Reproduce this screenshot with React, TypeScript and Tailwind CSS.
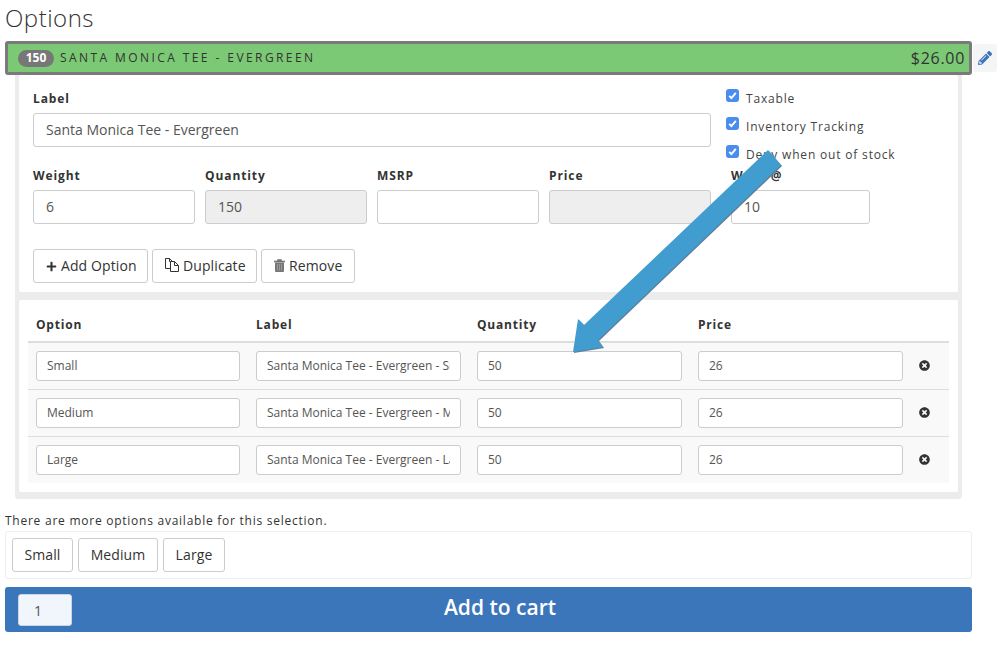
import { FaPencilAlt, FaPlus, FaTimesCircle } from "react-icons/fa";

const inputBase =
  "block w-full rounded-[3px] border border-[#cccccc] pb-[2px] text-[#555555] outline-none";

function Field({ label, value, disabled, width }: { label: string; value: string; disabled?: boolean; width: string }) {
  return (
    <div className={width}>
      <div className="mt-[1px] h-4 text-[12px] leading-4 font-bold tracking-[0.9px] text-[#333333]">{label}</div>
      <input
        readOnly
        value={value}
        className={`${inputBase} mt-[6px] h-[34px] px-3 text-[14px] ${disabled ? "bg-[#eeeeee]" : "bg-white"}`}
      />
    </div>
  );
}

function Check({ label }: { label: string }) {
  return (
    <div className="flex h-5 items-center">
      <svg width="13" height="13" viewBox="0 0 13 13" className="-translate-y-[3px]">
        <rect width="13" height="13" rx="3" fill="#4a8df0" />
        <path d="M3.2 6.8 L5.4 9 L9.8 3.8" fill="none" stroke="#ffffff" strokeWidth="1.9" />
      </svg>
      <span className="ml-[7px] translate-y-[1px] text-[12px] tracking-[0.82px] text-[#444444]">{label}</span>
    </div>
  );
}

function FilesIcon() {
  return (
    <svg width="14" height="14" viewBox="0 0 14 14" className="mr-1" fill="#ffffff" stroke="#333333" strokeWidth="1">
      <path d="M0.5 0.5 H4.5 L7.5 3.5 V10.5 H0.5 Z" />
      <path d="M4.5 0.5 V3.5 H7.5" fill="none" />
      <path d="M5.5 3.5 H9.5 L13.5 7.5 V13.5 H5.5 Z" />
      <path d="M9.5 3.5 V7.5 H13.5" fill="none" />
    </svg>
  );
}

function TrashIcon() {
  return (
    <svg width="11" height="13" viewBox="0 0 11 13" className="mr-1">
      <path d="M0 2 H11 V3 H0 Z M3.5 2 V0.6 H7.5 V2" fill="#777777" stroke="#777777" strokeWidth="0.6" />
      <path d="M1 3.5 H10 V12 Q10 13 9 13 H2 Q1 13 1 12 Z" fill="#777777" />
      <path d="M3.5 5 V11.5 M5.5 5 V11.5 M7.5 5 V11.5" stroke="#a8a8a8" strokeWidth="0.7" />
    </svg>
  );
}

function OutlineButton({ width, children }: { width: string; children: React.ReactNode }) {
  return (
    <button
      className={`flex h-[34px] items-center rounded-[3px] border border-[#cccccc] bg-white pb-[2px] pl-3 text-[14px] tracking-[0.1px] text-[#333333] ${width}`}
    >
      {children}
    </button>
  );
}

const rows = [
  { option: "Small", label: "Santa Monica Tee - Evergreen - Small" },
  { option: "Medium", label: "Santa Monica Tee - Evergreen - Medium" },
  { option: "Large", label: "Santa Monica Tee - Evergreen - Large" },
];

const sizes = [
  { name: "Small", width: "w-[61px]" },
  { name: "Medium", width: "w-[80px]" },
  { name: "Large", width: "w-[62px]" },
];

const tableCols = "grid grid-cols-[204px_205px_205px_205px_1fr] gap-x-4 px-2";
const cellInput = `${inputBase} h-[30px] bg-white px-[10px] text-[12px]`;

export default function App() {
  return (
    <div className="relative h-[662px] w-[1004px] overflow-hidden bg-white pl-[5px] font-['Open_Sans',sans-serif] text-[#333333]">
      <h2 className="flex h-[41px] items-center pb-[6px] text-[24px] font-light tracking-[0.5px]">Options</h2>

      {/* Selected option bar */}
      <div className="flex items-center">
        <div className="flex h-[34px] w-[967px] items-center rounded-[3px] border-[3px] border-[#7a7a7a] bg-[#7bc975] pr-[4px] pl-[10px]">
          <span className="flex h-[17px] w-[36px] items-center justify-center rounded-full bg-[#777777] text-[12px] font-bold text-white">
            150
          </span>
          <span className="ml-[6px] text-[12px] tracking-[2.42px] text-[#333333]">SANTA MONICA TEE - EVERGREEN</span>
          <span className="ml-auto text-[16px] tracking-[0.7px] text-[#333333]">$26.00</span>
        </div>
        <div className="ml-[1px] flex h-[28px] w-[24px] items-center justify-center rounded-[3px] bg-[#f5f5f5] text-[#3c76ba]">
          <FaPencilAlt size={14} />
        </div>
      </div>

      {/* Option details */}
      <div className="ml-[10px] w-[947px] rounded-b-[4px] border-x-4 border-b-[7px] border-[#ececec] bg-[#ececec]">
        <div className="h-[217px] rounded-[2px] bg-white pl-[14px]">
          <div className="flex h-[92px]">
            <div className="w-[678px] pt-4">
              <div className="h-4 text-[12px] leading-4 font-bold tracking-[0.9px]">Label</div>
              <input
                readOnly
                value="Santa Monica Tee - Evergreen"
                className={`${inputBase} mt-[6px] h-[34px] bg-white px-3 text-[14px]`}
              />
            </div>
            <div className="ml-[15px] flex flex-col gap-2 pt-[13px]">
              <Check label="Taxable" />
              <Check label="Inventory Tracking" />
              <Check label="Deny when out of stock" />
            </div>
          </div>
          <div className="flex gap-[10px]">
            <Field width="w-[162px]" label="Weight" value="6" />
            <Field width="w-[162px]" label="Quantity" value="150" disabled />
            <Field width="w-[162px]" label="MSRP" value="" />
            <Field width="w-[162px]" label="Price" value="" disabled />
            <Field width="ml-[10px] w-[139px]" label="Warn @" value="10" />
          </div>
          <div className="mt-[25px] flex gap-1">
            <OutlineButton width="w-[115px]">
              <FaPlus size={11} className="mr-1 translate-y-[1px]" />
              Add Option
            </OutlineButton>
            <OutlineButton width="w-[105px]">
              <FilesIcon />
              Duplicate
            </OutlineButton>
            <OutlineButton width="w-[94px]">
              <TrashIcon />
              Remove
            </OutlineButton>
          </div>
        </div>

        <div className="mt-2 h-[192px] rounded-[2px] bg-white px-[9px]">
          <div className={`${tableCols} pt-[17px] pb-2 text-[12px] leading-4 font-bold tracking-[0.8px]`}>
            <div>Option</div>
            <div>Label</div>
            <div>Quantity</div>
            <div>Price</div>
          </div>
          <div className="border-t-2 border-[#dddddd]">
            {rows.map((row, i) => (
              <div
                key={row.option}
                className={`${tableCols} items-center bg-[#f9f9f9] py-2 ${i > 0 ? "border-t border-[#dddddd]" : ""}`}
              >
                <input readOnly value={row.option} className={cellInput} />
                <input readOnly value={row.label} className={cellInput} />
                <input readOnly value="50" className={cellInput} />
                <input readOnly value="26" className={cellInput} />
                <FaTimesCircle size={11} className="-translate-y-[1px] text-[#333333]" />
              </div>
            ))}
          </div>
        </div>
      </div>

      <p className="mt-[14px] h-[18px] text-[12px] leading-4 tracking-[0.75px] text-[#333333]">
        There are more options available for this selection.
      </p>

      <div className="flex h-[48px] w-[967px] gap-[5px] rounded-[3px] border border-[#eeeeee] p-[6px]">
        {sizes.map((size) => (
          <button
            key={size.name}
            className={`h-[34px] rounded-[3px] border border-[#cccccc] bg-white pb-[2px] text-center text-[14px] tracking-[0.1px] text-[#333333] ${size.width}`}
          >
            {size.name}
          </button>
        ))}
      </div>

      <div className="mt-2 flex h-[45px] w-[967px] items-center rounded-[3px] bg-[#3c76ba] pl-[13px]">
        <input
          readOnly
          value="1"
          className="h-[32px] w-[54px] rounded-[3px] border border-[#c9d6e4] bg-[#f0f6fc] px-[15px] pt-[1px] text-[14px] text-[#555555] outline-none"
        />
        <div className="flex-1 pr-[44px] pb-[4px] text-center text-[21px] font-semibold text-white">Add to cart</div>
      </div>

      {/* Annotation arrow drawn over the form */}
      <svg className="pointer-events-none absolute top-0 left-0" width="1004" height="662" viewBox="0 0 1004 662">
        <polygon
          points="768,150 781,165 598,340 603,347 573,352 578,319 584,325"
          fill="#5d7f9f"
          transform="translate(1,1)"
        />
        <polygon points="768,150 781,165 598,340 603,347 573,352 578,319 584,325" fill="#419dd0" />
      </svg>
    </div>
  );
}
